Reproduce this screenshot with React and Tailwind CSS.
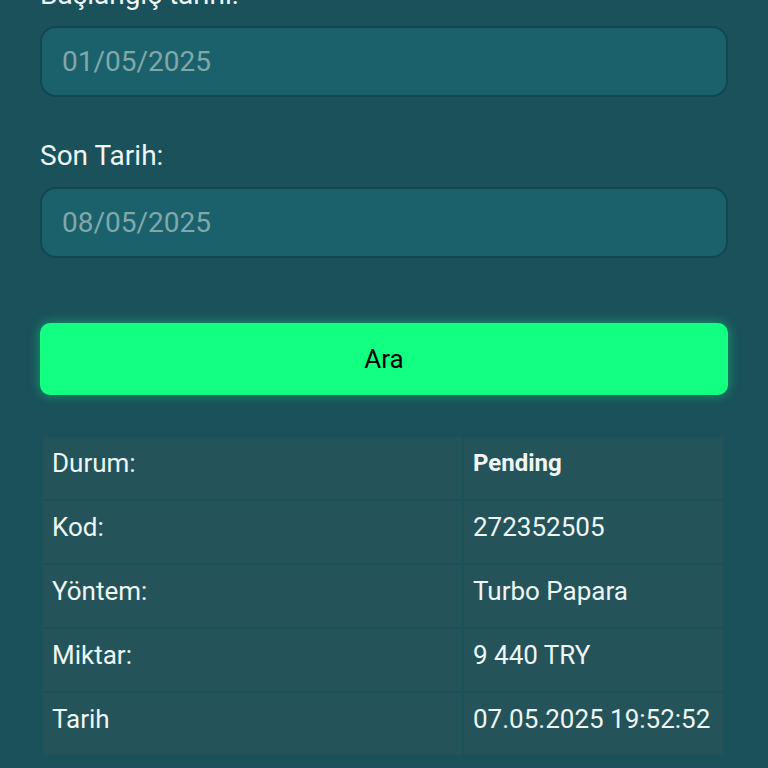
import { useState } from "react";

const ROWS = [
  { label: "Durum:", value: "Pending", bold: true },
  { label: "Kod:", value: "272352505" },
  { label: "Yöntem:", value: "Turbo Papara" },
  { label: "Miktar:", value: "9 440 TRY" },
  { label: "Tarih", value: "07.05.2025 19:52:52" },
];

function DateField({ label, placeholder }) {
  const [value, setValue] = useState("");
  return (
    <div>
      <label className="block text-[28px] leading-[36px] text-[#eef6f6] mb-[13px]">
        {label}
      </label>
      <input
        type="text"
        value={value}
        onChange={(e) => setValue(e.target.value)}
        placeholder={placeholder}
        className="block w-full h-[71px] rounded-[16px] border-2 border-[#134650] bg-[#1a616b] px-5 text-[28px] text-white placeholder:text-[#80a8ac] outline-none"
      />
    </div>
  );
}

export default function App() {
  return (
    <div
      className="h-[768px] overflow-hidden bg-[#1a515a] px-10"
      style={{ fontFamily: "Roboto, 'Liberation Sans', sans-serif" }}
    >
      <div className="-mt-[23px]">
        <DateField label="Başlangıç tarihi:" placeholder="01/05/2025" />
        <div className="mt-[41px]">
          <DateField label="Son Tarih:" placeholder="08/05/2025" />
        </div>
      </div>

      <button className="mt-[65px] w-full h-[72px] rounded-[10px] bg-[#12ff82] text-black text-[26px] shadow-[0_0_12px_rgba(18,255,130,0.45)]">
        Ara
      </button>

      <div className="mt-[42px] ml-[3px] mr-[5px] flex flex-col gap-[2px]">
        {ROWS.map((r) => (
          <div key={r.label} className="flex gap-[2px] h-[62px]">
            <div className="w-[419px] shrink-0 bg-[#24545a] pl-[9px] pt-[8px] text-[26px] leading-[36px] text-[#eef6f6]">
              {r.label}
            </div>
            <div
              className={`flex-1 bg-[#24545a] pl-[9px] pt-[8px] leading-[36px] text-[#eef6f6] ${
                r.bold ? "font-bold text-[24px]" : "text-[26px]"
              }`}
            >
              {r.value}
            </div>
          </div>
        ))}
      </div>
    </div>
  );
}
